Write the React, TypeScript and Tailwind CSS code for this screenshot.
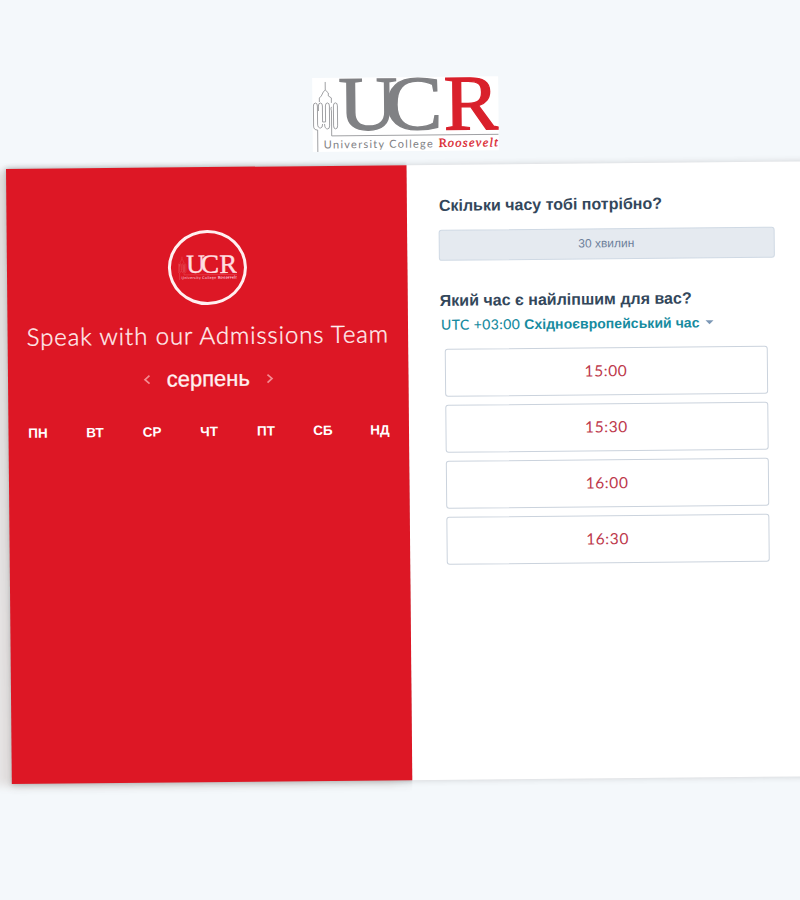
import React from "react";

const days = ["ПН", "ВТ", "СР", "ЧТ", "ПТ", "СБ", "НД"];
const times = ["15:00", "15:30", "16:00", "16:30"];

type LogoProps = { gray: string; red: string; line: string; className: string };

function Logo({ gray, red, line, className }: LogoProps) {
  return (
    <svg viewBox="0 0 186 74" className={className} preserveAspectRatio="none">
      <g fill="none" stroke={line} strokeWidth="0.9" strokeLinejoin="round">
        <path d="M5 74V52Q1 52 1 48V28Q1 25 3 25Q5 25 5 28V46Q5 50 8 50Q10 50 10 46M6 33V28Q6 25 8 25Q10 25 10 28V44H13V28Q13 25 15 25Q17 25 17 28V48Q17 51 15 51Q12 51 12 46M7 24V20L9 18L11 14L13 12V4M13 12L16 15V18L19 20V25M19 58V33Q18 31 19 29M21 48V28Q21 25 23 25Q25 25 25 28V48Q25 51 23 51Q21 51 21 48M19 58H186" />
      </g>
      <g fontFamily='"Liberation Serif", serif'>
        <text x="26" y="52" fontSize="77" fill={gray} stroke={gray} strokeWidth="1.3" textLength="59" lengthAdjust="spacingAndGlyphs">U</text>
        <text x="72" y="52" fontSize="77" fill={gray} stroke={gray} strokeWidth="1.3" textLength="58" lengthAdjust="spacingAndGlyphs">C</text>
        <text x="131" y="53" fontSize="79" fill={red} stroke={red} strokeWidth="1.2" textLength="56" lengthAdjust="spacingAndGlyphs">R</text>
      </g>
      <text x="11" y="70.500" fontSize="11" fill={gray} fontFamily="Lato, sans-serif" textLength="109" lengthAdjust="spacing">University College</text>
      <text x="126" y="70" fontSize="12.5" fill={red} stroke={red} strokeWidth="0.3" fontFamily='"Liberation Serif", serif'>R</text>
      <text x="135" y="70" fontSize="12.5" fontStyle="italic" fill={red} stroke={red} strokeWidth="0.3" fontFamily='"Liberation Serif", serif' textLength="50" lengthAdjust="spacing">oosevelt</text>
    </svg>
  );
}

export default function App() {
  return (
    <div className="h-[900px] w-[800px] overflow-hidden bg-[#f4f8fb] font-['Liberation_Sans',sans-serif]">
      <div className="ml-[6px] w-[860px] origin-[0_169px] rotate-[-0.545deg]">
        <header className="flex h-[169px] pt-[81px] pl-[307px]">
          <div className="h-[74px] w-[186px] bg-white">
            <Logo gray="#808184" red="#d9202b" line="#96979a" className="h-full w-full" />
          </div>
        </header>

        <main className="flex h-[615px] bg-white shadow-[0_0_6px_rgba(60,50,50,0.2)]">
          <section className="flex w-[400.500px] shrink-0 flex-col items-center bg-[#dd1725] pt-[63px] text-white shadow-[0_0_4px_rgba(60,80,85,0.25),0_3px_10px_rgba(80,70,65,0.14),-16px_2px_8px_#e3e0e0] [clip-path:inset(-12px_0_-16px_-24px)]">
            <div className="flex h-[75px] w-[79px] items-center justify-center rounded-[50%] border-[3px] border-[#fff0f0]">
              <Logo gray="#ffdfe1" red="#ffdfe1" line="#ef8088" className="h-[25px] w-[59px]" />
            </div>
            <h1 className="mt-[14px] h-[32px] whitespace-nowrap font-['Lato'] text-[24px] font-light leading-[32px] tracking-[0.900px] text-[#fff0f0] [-webkit-text-stroke:0.350px_#fff0f0]">
              Speak with our Admissions Team
            </h1>
            <div className="mt-[12px] flex h-[32px] items-center text-[#fff0f0]">
              <svg width="8" height="12" viewBox="0 0 8 12" className="text-[#f48c92]"><path d="M6.500 2L2 6l4.500 4" fill="none" stroke="currentColor" strokeWidth="1.700" /></svg>
              <span className="mx-[16px] text-[22px] leading-[32px] [-webkit-text-stroke:0.300px_#fff0f0]">серпень</span>
              <svg width="8" height="12" viewBox="0 0 8 12" className="text-[#f48c92]"><path d="M1.500 2L6 6l-4.500 4" fill="none" stroke="currentColor" strokeWidth="1.700" /></svg>
            </div>
            <div className="mt-[28px] ml-px grid w-[399px] grid-cols-7 self-start text-center text-[13.500px] leading-[18px] font-bold">
              {days.map((d) => (
                <span key={d}>{d}</span>
              ))}
            </div>
          </section>

          <section className="flex flex-1 flex-col pt-[31px] pl-[32px]">
            <h2 className="h-[20px] text-[16px] leading-[20px] font-bold text-[#33475b]">Скільки часу тобі потрібно?</h2>
            <button className="mt-[14px] -ml-px h-[31px] w-[336px] rounded-[3px] border border-[#cfd9e4] bg-[#e5eaf0] pb-[2px] text-[12px] text-[#6c809a]">
              30 хвилин
            </button>
            <h2 className="mt-[30px] h-[20px] text-[16px] leading-[20px] font-bold text-[#33475b]">Який час є найліпшим для вас?</h2>
            <div className="mt-[4px] ml-[1px] flex h-[20px] items-center text-[14px] leading-[20px] font-bold text-[#168ba0]">
              <span className="font-['Lato'] font-medium tracking-[0.400px]">UTC +03:00</span>
              <span className="ml-[4px] tracking-[0.050px]">Східноєвропейський час</span>
              <span className="ml-[6px] border-x-4 border-t-4 border-x-transparent border-t-[#7c98b6]" />
            </div>
            <div className="mt-[14px] ml-[4px] flex flex-col gap-[8px]">
              {times.map((t) => (
                <button key={t} className="h-[48px] w-[323px] rounded-[3px] border border-[#cbd3dd] bg-white font-['Lato'] text-[15.500px] tracking-[0.600px] text-[#bd384b]">
                  {t}
                </button>
              ))}
            </div>
          </section>
        </main>
      </div>
    </div>
  );
}
